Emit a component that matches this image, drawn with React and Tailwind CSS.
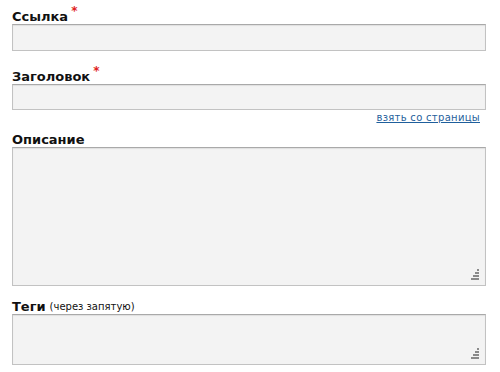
import React from "react";

const Grip = () => (
  <svg className="absolute right-[5px] bottom-[5px]" width="11" height="11" viewBox="0 0 11 11">
    {[
      [8, 0],
      [6, 3], [8, 3],
      [4, 6], [6, 6], [8, 6],
      [2, 9], [4, 9], [6, 9], [8, 9],
    ].map(([x, y]) => (
      <rect key={x + "-" + y} x={x} y={y} width="2" height="2" fill="#8a8a8a" />
    ))}
  </svg>
);

const Label = ({ children, required, note }) => (
  <div className="h-[22px] flex items-end pb-[1px] leading-[13px] text-[13px] font-bold text-[#111]">
    <span>{children}</span>
    {required && <span className="text-[#e02020] text-[12px] self-start relative top-[3px] ml-[3px]">*</span>}
    {note && <span className="font-normal text-[10px] ml-[4px]">{note}</span>}
  </div>
);

const fieldCls = "w-full bg-[#f3f3f3] border border-[#c2c2c2] border-t-[#a9a9a9] shadow-[inset_0_1px_1px_rgba(0,0,0,0.08)]";

export default function App() {
  return (
    <div className="w-[500px] h-[372px] bg-white pl-[12px] pr-[14px] pt-[2px] overflow-hidden" style={{ fontFamily: '"DejaVu Sans", Verdana, sans-serif' }}>
      <Label required>Ссылка</Label>
      <div className={fieldCls + " h-[27px]"} />

      <div className="h-[11px]" />
      <Label required>Заголовок</Label>
      <div className={fieldCls + " h-[26px]"} />
      <div className="flex justify-end pr-[6px] h-[13px] items-end">
        <a className="text-[10px] text-[#1f5f9c] underline leading-none tracking-[0.3px]">взять со страницы</a>
      </div>

      <div className="h-[2px]" />
      <Label>Описание</Label>
      <div className={fieldCls + " h-[139px] relative"}>
        <Grip />
      </div>

      <div className="h-[6px]" />
      <Label note="(через запятую)">Теги</Label>
      <div className={fieldCls + " h-[51px] relative"}>
        <Grip />
      </div>
    </div>
  );
}
